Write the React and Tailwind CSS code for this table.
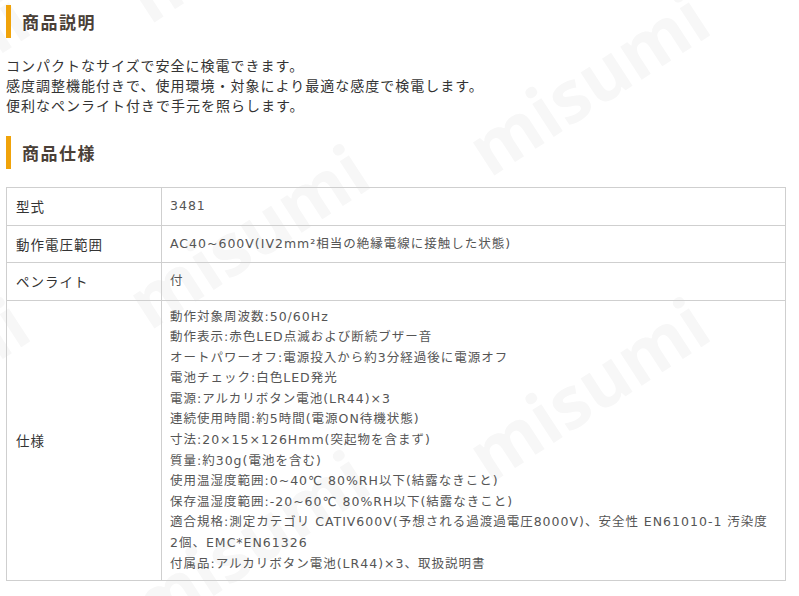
import React from "react";

const specLines = [
  "動作対象周波数:50/60Hz",
  "動作表示:赤色LED点滅および断続ブザー音",
  "オートパワーオフ:電源投入から約3分経過後に電源オフ",
  "電池チェック:白色LED発光",
  "電源:アルカリボタン電池(LR44)×3",
  "連続使用時間:約5時間(電源ON待機状態)",
  "寸法:20×15×126Hmm(突起物を含まず)",
  "質量:約30g(電池を含む)",
  "使用温湿度範囲:0~40℃ 80%RH以下(結露なきこと)",
  "保存温湿度範囲:-20~60℃ 80%RH以下(結露なきこと)",
  "適合規格:測定カテゴリ CATIV600V(予想される過渡過電圧8000V)、安全性 EN61010-1 汚染度",
  "2個、EMC*EN61326",
  "付属品:アルカリボタン電池(LR44)×3、取扱説明書",
];

const marks = [
  [-93, 82],
  [-93, 388],
  [247, -71],
  [247, 235],
  [247, 541],
  [587, 82],
  [587, 388],
  [927, -71],
  [927, 235],
  [927, 541],
];

function Heading({ children }) {
  return (
    <div className="flex items-center h-[33px]">
      <div className="w-[5px] h-[33px] bg-[#f0a30a]" />
      <h2 className="ml-[11px] text-[17px] font-bold tracking-[1.5px] text-[#4a4037] leading-none">
        {children}
      </h2>
    </div>
  );
}

export default function App() {
  const jp = { fontFamily: '"Noto Sans CJK JP", "Noto Sans", sans-serif' };
  const val = { fontFamily: '"DejaVu Sans", "Noto Sans CJK JP", sans-serif' };
  return (
    <div className="relative w-[799px] h-[596px] overflow-hidden bg-white" style={jp}>
      <div className="absolute inset-0 pointer-events-none select-none" aria-hidden="true">
        {marks.map(([x, y], i) => (
          <div
            key={i}
            className="absolute -translate-x-1/2 -translate-y-1/2 -rotate-[33deg] text-[72px] font-bold text-[#f7f7f7] leading-none whitespace-nowrap"
            style={{ left: x, top: y, fontFamily: '"Open Sans", sans-serif' }}
          >
            misumi
          </div>
        ))}
      </div>
      <div className="relative px-[6px] pt-[5px]">
        <Heading>商品説明</Heading>
        <div className="mt-[17px] text-[14px] leading-[20px] tracking-[1px] text-[#333]">
          <p>コンパクトなサイズで安全に検電できます。</p>
          <p>感度調整機能付きで、使用環境・対象により最適な感度で検電します。</p>
          <p>便利なペンライト付きで手元を照らします。</p>
        </div>
        <div className="mt-[21px]">
          <Heading>商品仕様</Heading>
        </div>
        <table className="mt-[18px] w-[780px] border-collapse border border-[#cfcfcf]">
          <tbody>
            <tr className="border-b border-[#cfcfcf]">
              <td className="w-[155px] border-r border-[#cfcfcf] px-[9px] py-[8px] text-[13.5px] leading-[20.5px] tracking-[1px] text-[#333]">
                型式
              </td>
              <td className="px-[8px] py-[8px] text-[12.5px] leading-[20.5px] tracking-[1px] text-[#555]" style={val}>
                3481
              </td>
            </tr>
            <tr className="border-b border-[#cfcfcf]">
              <td className="border-r border-[#cfcfcf] px-[9px] py-[8px] text-[13.5px] leading-[20.5px] tracking-[1px] text-[#333]">
                動作電圧範囲
              </td>
              <td className="px-[8px] py-[8px] text-[12.5px] leading-[20.5px] tracking-[1px] text-[#555]" style={val}>
                AC40~600V(IV2mm²相当の絶縁電線に接触した状態)
              </td>
            </tr>
            <tr className="border-b border-[#cfcfcf]">
              <td className="border-r border-[#cfcfcf] px-[9px] py-[8px] text-[13.5px] leading-[20.5px] tracking-[1px] text-[#333]">
                ペンライト
              </td>
              <td className="px-[8px] py-[8px] text-[12.5px] leading-[20.5px] tracking-[1px] text-[#555]" style={val}>
                付
              </td>
            </tr>
            <tr>
              <td className="border-r border-[#cfcfcf] px-[9px] text-[13.5px] leading-[21px] tracking-[1px] text-[#333]">
                仕様
              </td>
              <td className="px-[8px] py-[6px] text-[12.5px] leading-[20.6px] tracking-[1px] text-[#555]" style={val}>
                {specLines.map((l, i) => (
                  <div key={i} className="whitespace-nowrap">{l}</div>
                ))}
              </td>
            </tr>
          </tbody>
        </table>
      </div>
    </div>
  );
}
